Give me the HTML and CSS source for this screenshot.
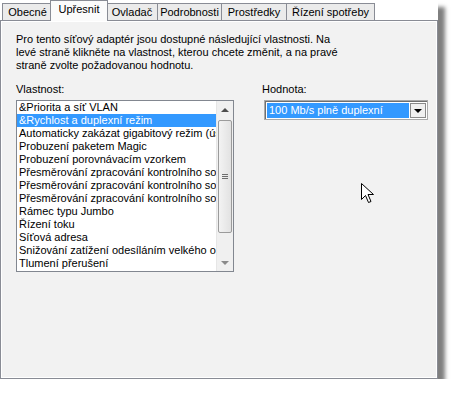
FILE: index.html
```html
<!DOCTYPE html>
<html lang="cs">
<head>
<meta charset="utf-8">
<title>Upřesnit</title>
<link rel="stylesheet" href="styles.css">
</head>
<body>
<div class="window">
  <div class="tabs">
    <div class="tab tab-general">Obecné</div>
    <div class="tab tab-advanced active">Upřesnit</div>
    <div class="tab tab-driver">Ovladač</div>
    <div class="tab tab-details">Podrobnosti</div>
    <div class="tab tab-resources">Prostředky</div>
    <div class="tab tab-power">Řízení spotřeby</div>
  </div>
  <div class="panel">
    <p class="intro">Pro tento síťový adaptér jsou dostupné následující vlastnosti. Na<br>levé straně klikněte na vlastnost, kterou chcete změnit, a na pravé<br>straně zvolte požadovanou hodnotu.</p>
    <div class="fields">
      <div class="field">
        <div class="label">Vlastnost:</div>
        <div class="listbox">
          <ul class="items">
            <li>&amp;Priorita a síť VLAN</li>
            <li class="selected">&amp;Rychlost a duplexní režim</li>
            <li>Automaticky zakázat gigabitový režim (úsporný režim)</li>
            <li>Probuzení paketem Magic</li>
            <li>Probuzení porovnávacím vzorkem</li>
            <li>Přesměrování zpracování kontrolního součtu IPv4</li>
            <li>Přesměrování zpracování kontrolního součtu TCP</li>
            <li>Přesměrování zpracování kontrolního součtu UDP</li>
            <li>Rámec typu Jumbo</li>
            <li>Řízení toku</li>
            <li>Síťová adresa</li>
            <li>Snižování zatížení odesíláním velkého objemu dat</li>
            <li>Tlumení přerušení</li>
          </ul>
          <div class="scrollbar">
            <div class="sb-btn"><span class="arrow-up"></span></div>
            <div class="sb-track">
              <div class="sb-thumb"><span class="grip"></span></div>
            </div>
            <div class="sb-btn"><span class="arrow-down"></span></div>
          </div>
        </div>
      </div>
      <div class="field value">
        <div class="label">Hodnota:</div>
        <div class="combo">
          <div class="combo-text">100 Mb/s plně duplexní</div>
          <div class="combo-btn"><span class="arrow-down dark"></span></div>
        </div>
      </div>
    </div>
  </div>
  <svg class="cursor" width="14" height="22" viewBox="0 0 14 22">
    <path d="M0.5 0.5 L0.5 16.5 L4.5 12.5 L7.5 19.5 L10 18.5 L7 11.5 L12.5 11.5 Z" fill="#fff" stroke="#000" stroke-width="1" stroke-linejoin="miter"/>
  </svg>
</div>
</body>
</html>
```

FILE: styles.css
```css
html, body {
  margin: 0;
  padding: 0;
  background: #ffffff;
}

body {
  font-family: "Liberation Sans", Arial, sans-serif;
  font-size: 11px;
  color: #000;
}

.window {
  position: relative;
  width: 438px;
  height: 379px;
  background: #ffffff;
  box-shadow: 7px 7px 4px rgba(0, 0, 0, 0.5);
}

.tabs {
  display: flex;
  align-items: flex-end;
  height: 20px;
  padding-left: 2px;
  position: relative;
  z-index: 1;
}

.tab {
  flex: none;
  height: 17px;
  line-height: 16px;
  text-align: center;
  border: 1px solid #898c95;
  border-bottom: none;
  background: #ebebeb;
  margin-right: -1px;
  white-space: nowrap;
  box-sizing: border-box;
}

.tab-general { width: 51px; }
.tab-advanced { width: 58px; }
.tab-driver { width: 52px; }
.tab-details { width: 65px; }
.tab-resources { width: 66px; }
.tab-power { width: 89px; }

.tab.active {
  height: 21px;
  line-height: 16px;
  margin: 0 -2px -1px -2px;
  background: #fbfbfb;
  position: relative;
  z-index: 2;
}

.panel {
  box-sizing: border-box;
  height: 359px;
  border: 1px solid #898c95;
  box-shadow: inset 0 0 0 1px #ffffff;
  background: #f2f2f2;
  padding: 12px 0 0 15px;
}

.intro {
  margin: 0;
  line-height: 13px;
  white-space: nowrap;
}

.fields {
  display: grid;
  grid-template-columns: 218px 166px;
  column-gap: 28px;
  margin-top: 11px;
}

.label {
  line-height: 13px;
  margin-bottom: 4px;
}

.listbox {
  display: flex;
  height: 172px;
  box-sizing: border-box;
  border: 1px solid #828790;
  background: #ffffff;
}

.items {
  flex: 1;
  min-width: 0;
  list-style: none;
  margin: 0;
  padding: 0;
  overflow: hidden;
}

.items li {
  height: 13px;
  line-height: 13px;
  padding-left: 2px;
  white-space: nowrap;
  overflow: hidden;
}

.items li.selected {
  background: #3399ff;
  color: #ffffff;
}

.scrollbar {
  width: 16px;
  display: flex;
  flex-direction: column;
  background: #f0f0f0;
  border-left: 1px solid #e6e6e6;
}

.sb-btn {
  height: 17px;
  display: flex;
  align-items: center;
  justify-content: center;
}

.sb-track {
  flex: 1;
  padding: 2px 1px 21px 1px;
  display: flex;
}

.sb-thumb {
  flex: 1;
  border: 1px solid #9b9b9b;
  border-radius: 2px;
  background: linear-gradient(to right, #f3f3f3, #e2e2e2);
  display: flex;
  align-items: center;
  justify-content: center;
}

.grip {
  width: 6px;
  height: 5px;
  border-top: 1px solid #6e6e6e;
  border-bottom: 1px solid #6e6e6e;
  box-sizing: border-box;
  position: relative;
}

.grip::after {
  content: "";
  position: absolute;
  left: 0;
  right: 0;
  top: 1px;
  height: 1px;
  background: #6e6e6e;
}

.arrow-up {
  width: 0;
  height: 0;
  border-left: 4px solid transparent;
  border-right: 4px solid transparent;
  border-bottom: 4px solid #4d4d4d;
}

.arrow-down {
  width: 0;
  height: 0;
  border-left: 4px solid transparent;
  border-right: 4px solid transparent;
  border-top: 4px solid #8a8a8a;
}

.arrow-down.dark {
  border-top-color: #000;
}

.combo {
  margin-left: 2px;
  width: 164px;
  height: 20px;
  box-sizing: border-box;
  border: 1px solid #a9a9a9;
  box-shadow: inset 1px 1px 0 #6f6f6f;
  background: #ffffff;
  display: flex;
  padding: 2px 1px 1px 2px;
  gap: 1px;
}

.combo-text {
  flex: 1;
  background: #3399ff;
  color: #ffffff;
  line-height: 15px;
  padding-left: 2px;
  white-space: nowrap;
}

.combo-btn {
  width: 16px;
  background: #f0f0f0;
  border: 1px solid #8a8a8a;
  box-sizing: border-box;
  display: flex;
  align-items: center;
  justify-content: center;
}

.cursor {
  position: absolute;
  left: 361px;
  top: 183px;
}
```
